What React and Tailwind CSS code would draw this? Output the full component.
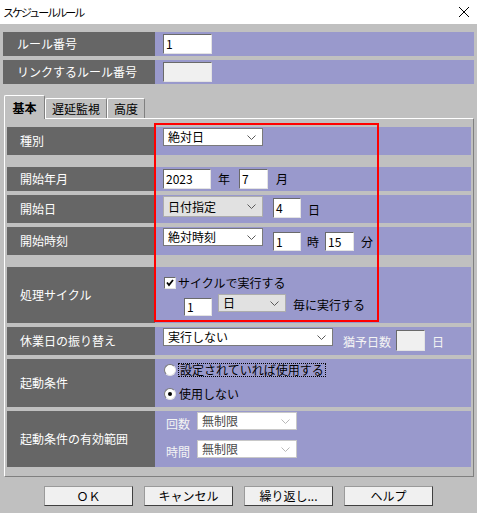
import React from 'react';

const Chevron = ({ color = '#5a5a5a' }) => (
  <svg width="9" height="5" viewBox="0 0 9 5" className="shrink-0">
    <path d="M0.5 0.5 L4.5 4.5 L8.5 0.5" fill="none" stroke={color} strokeWidth="1" />
  </svg>
);

const Select = ({ value, className = '', gray = false, disabled = false }) => {
  const tone = gray
    ? 'bg-[#e1e1e1] border-[#adadad]'
    : disabled
    ? 'bg-white border-[#c8c8c8] text-[#4a4a4a]'
    : 'bg-white border-[#7a7a7a]';
  return (
    <div className={`shrink-0 border flex items-center justify-between pl-[4px] pr-[6px] leading-none ${tone} ${className}`}>
      <span>{value}</span>
      <Chevron color={disabled ? '#b8b8b8' : '#5a5a5a'} />
    </div>
  );
};

const TextBox = ({ value = '', className = '', disabled = false }) => (
  <div
    className={`shrink-0 border border-[#e3e3e3] border-t-[#6a6a6a] border-l-[#6a6a6a] flex items-center pl-[2px] leading-none ${disabled ? 'bg-[#f0f0f0]' : 'bg-white'} ${className}`}
  >
    {value}
  </div>
);

const Checkbox = () => (
  <div className="w-[12px] h-[12px] shrink-0 bg-white border border-[#e3e3e3] border-t-[#6a6a6a] border-l-[#6a6a6a] flex items-center justify-center">
    <svg width="8" height="8" viewBox="0 0 8 8">
      <path d="M1 3.5 L3 6 L7 1" fill="none" stroke="#000" strokeWidth="1.8" />
    </svg>
  </div>
);

const Radio = ({ checked }) => (
  <div className="w-[12px] h-[12px] shrink-0 rounded-full bg-white border border-[#e3e3e3] border-t-[#7a7a7a] border-l-[#7a7a7a] flex items-center justify-center">
    {checked && <div className="w-[4px] h-[4px] rounded-full bg-black" />}
  </div>
);

const TopRow = ({ label, children }) => (
  <div className="flex h-[24px]">
    <div className="w-[152px] bg-[#666666] text-white flex items-center pl-[14px]">{label}</div>
    <div className="flex-1 bg-[#9999cc] flex items-center pl-[8px]">{children}</div>
  </div>
);

const Row = ({ label, className = '', contentClass = '', children }) => (
  <div className={`flex ${className}`}>
    <div className="w-[148px] shrink-0 bg-[#666666] text-white flex items-center pl-[13px] whitespace-nowrap">{label}</div>
    <div className={`flex-1 bg-[#9999cc] whitespace-nowrap ${contentClass}`}>{children}</div>
  </div>
);

const Button = ({ children }) => (
  <div className="w-[89px] h-[20px] bg-[#f0f0f0] border border-[#9a9a9a] border-r-[#404040] border-b-[#404040] flex items-center justify-center leading-none">
    {children}
  </div>
);

export default function App() {
  return (
    <div className="w-[477px] h-[513px] bg-[#c0c0c0] relative overflow-hidden text-[12px] text-black font-['Noto_Sans_CJK_JP','Noto_Sans',sans-serif]">
      <div className="h-[24px] bg-white flex items-center justify-between pl-[3px] pr-[7px]">
        <span className="text-[11px] tracking-[-2px]">スケジュールルール</span>
        <svg width="12" height="12" viewBox="0 0 12 12">
          <path d="M1 1 L11 11 M11 1 L1 11" stroke="#000" strokeWidth="1" />
        </svg>
      </div>

      <div className="px-[3px] pt-[8px] flex flex-col gap-[4px]">
        <TopRow label="ルール番号">
          <TextBox value="1" className="w-[49px] h-[20px]" />
        </TopRow>
        <TopRow label="リンクするルール番号">
          <TextBox disabled className="w-[49px] h-[20px]" />
        </TopRow>
      </div>

      <div className="flex items-end h-[23px] mt-[11px] ml-[4px]">
        <div className="relative z-10 -mb-px h-[24px] w-[41px] bg-[#c0c0c0] border-t border-l border-white border-r border-r-[#808080] rounded-t-[2px] flex items-center justify-center font-bold">
          基本
        </div>
        <div className="h-[20px] w-[62px] border-t border-l border-white border-r border-r-[#808080] rounded-t-[2px] flex items-center justify-center">
          遅延監視
        </div>
        <div className="h-[20px] w-[38px] border-t border-l border-white border-r border-r-[#808080] rounded-t-[2px] flex items-center justify-center">
          高度
        </div>
      </div>

      <div className="ml-[4px] w-[470px] h-[359px] border border-white border-r-[#808080] border-b-[#808080] pt-[8px] px-[2px] flex flex-col">
        <Row label="種別" className="h-[28px]" contentClass="flex items-start pt-[1px] pl-[8px]">
          <Select value="絶対日" className="w-[100px] h-[18px]" />
        </Row>

        <Row label="開始年月" className="h-[24px] mt-[12px]" contentClass="flex items-center pl-[8px]">
          <TextBox value="2023" className="w-[48px] h-[20px]" />
          <span className="ml-[7px]">年</span>
          <TextBox value="7" className="w-[29px] h-[20px] ml-[9px]" />
          <span className="ml-[8px]">月</span>
        </Row>

        <Row label="開始日" className="h-[28px] mt-[4px]" contentClass="flex items-start pt-[1px] pl-[8px]">
          <Select value="日付指定" gray className="w-[100px] h-[21px]" />
          <TextBox value="4" className="w-[28px] h-[20px] ml-[10px] mt-[2px]" />
          <span className="ml-[7px] self-center">日</span>
        </Row>

        <Row label="開始時刻" className="h-[28px] mt-[4px]" contentClass="flex items-start pt-[1px] pl-[8px]">
          <Select value="絶対時刻" className="w-[100px] h-[18px]" />
          <TextBox value="1" className="w-[28px] h-[19px] ml-[10px] mt-[4px]" />
          <span className="ml-[6px] self-center">時</span>
          <TextBox value="15" className="w-[29px] h-[19px] ml-[6px] mt-[4px]" />
          <span className="ml-[7px] self-center">分</span>
        </Row>

        <Row label="処理サイクル" className="h-[56px] mt-[12px]" contentClass="flex flex-col pl-[9px] pt-[10px]">
          <div className="flex items-center h-[12px] gap-[2px]">
            <Checkbox />
            <span>サイクルで実行する</span>
          </div>
          <div className="flex items-start mt-[5px] pl-[20px]">
            <TextBox value="1" className="w-[28px] h-[18px] mt-[4px]" />
            <Select value="日" gray className="w-[68px] h-[18px] ml-[6px]" />
            <span className="ml-[7px] self-center">毎に実行する</span>
          </div>
        </Row>

        <Row label="休業日の振り替え" className="h-[28px] mt-[4px]" contentClass="flex items-start pt-[1px] pl-[8px]">
          <Select value="実行しない" className="w-[170px] h-[18px]" />
          <span className="ml-[10px] self-center text-[#f4f4f4]">猶予日数</span>
          <TextBox disabled className="w-[29px] h-[21px] ml-[5px] mt-[2px]" />
          <span className="ml-[7px] self-center text-[#f4f4f4]">日</span>
        </Row>

        <Row label="起動条件" className="h-[48px] mt-[4px]" contentClass="flex flex-col pl-[9px] pt-[4px] gap-[10px]">
          <div className="flex items-center h-[14px] gap-[2px]">
            <Radio />
            <span className="border border-dotted border-black leading-[12px] px-px">設定されていれば使用する</span>
          </div>
          <div className="flex items-center h-[14px] gap-[3px]">
            <Radio checked />
            <span>使用しない</span>
          </div>
        </Row>

        <Row label="起動条件の有効範囲" className="h-[56px] mt-[4px]" contentClass="flex flex-col pl-[11px] pt-[1px]">
          <div className="flex items-center h-[18px]">
            <span className="w-[24px] shrink-0 text-[#f4f4f4] leading-none mt-[6px]">回数</span>
            <Select value="無制限" disabled className="w-[100px] h-[18px] ml-[7px]" />
          </div>
          <div className="flex items-center h-[18px] mt-[10px]">
            <span className="w-[24px] shrink-0 text-[#f4f4f4] leading-none mt-[6px]">時間</span>
            <Select value="無制限" disabled className="w-[100px] h-[18px] ml-[7px]" />
          </div>
        </Row>
      </div>

      <div className="flex justify-center gap-[11px] mt-[9px]">
        <Button>ＯＫ</Button>
        <Button>キャンセル</Button>
        <Button>繰り返し...</Button>
        <Button>ヘルプ</Button>
      </div>

      <div className="absolute left-[154px] top-[123px] w-[225px] h-[199px] border-2 border-[#ff0000] pointer-events-none" />
    </div>
  );
}
